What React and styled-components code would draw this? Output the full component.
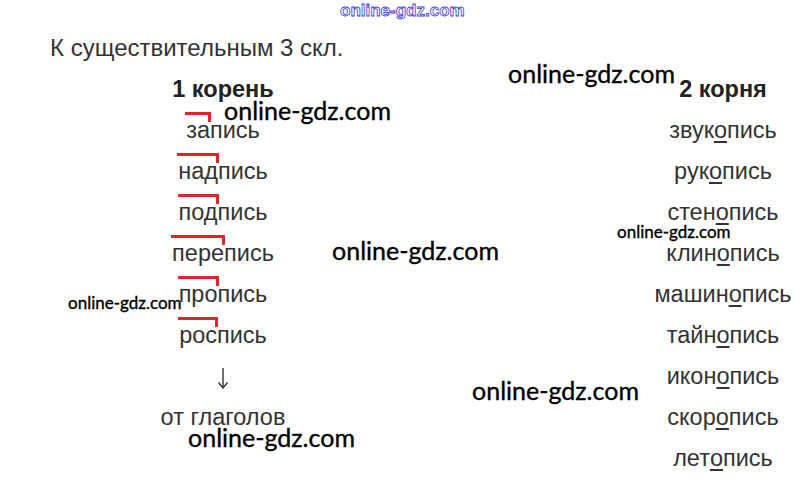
import React from "react";
import styled, { createGlobalStyle } from "styled-components";

const Global = createGlobalStyle`
  html, body { margin: 0; padding: 0; background: #fff; }
  body { font-family: "Liberation Sans", Arial, sans-serif; }
`;

const Page = styled.div`
  position: relative;
  width: 803px;
  height: 487px;
  box-sizing: border-box;
  padding-top: 36px;
  background: #fff;
  overflow: hidden;
  color: #333;
`;

const Title = styled.h1`
  margin: 0;
  padding-left: 50px;
  font: 400 24px/24px "Liberation Sans", Arial, sans-serif;
  color: #333;
`;

const Columns = styled.div`
  display: grid;
  grid-template-columns: 200px 160px;
  justify-content: space-between;
  padding-left: 123px;
  margin-top: 9px;
`;

const Column = styled.ul`
  list-style: none;
  margin: 0;
  padding: 0;
  display: flex;
  flex-direction: column;
  align-items: center;
`;

const Row = styled.li`
  height: 41px;
  display: flex;
  align-items: center;
  justify-content: center;
  font: 400 23.5px "Liberation Sans", Arial, sans-serif;
  color: #333;
  white-space: nowrap;
`;

const Heading = styled(Row)`
  font-weight: 700;
  font-size: 23.5px;
  color: #222;
`;

const ArrowRow = styled(Row)`
  padding-top: 2px;
  box-sizing: border-box;
`;

const ArrowIcon = styled.svg`
  width: 14px;
  height: 22px;
  display: block;
`;

const Prefix = styled.span`
  position: relative;
  &::after {
    content: "";
    position: absolute;
    left: -1px;
    right: -1px;
    top: -5px;
    height: 7px;
    border-top: 3px solid #e0262b;
    border-right: 3px solid #e0262b;
  }
`;

const Vowel = styled.span`
  text-decoration: underline;
  text-decoration-thickness: 2px;
  text-underline-offset: 3px;
`;

const Mark = styled.div`
  position: absolute;
  left: ${(p) => p.$x}px;
  top: ${(p) => p.$y}px;
  font: 400 ${(p) => p.$size}px/1 Lato, "Open Sans", sans-serif;
  color: #000;
  -webkit-text-stroke: 0.35px #000;
  white-space: nowrap;
  pointer-events: none;
`;

const TopMark = styled.div`
  position: absolute;
  left: 340px;
  top: 2px;
  font: 700 17px/1 "Liberation Sans", Arial, sans-serif;
  color: #fff;
  -webkit-text-stroke: 0.8px #3a3ad0;
  white-space: nowrap;
`;

const left = [
  ["за", "пись"],
  ["над", "пись"],
  ["под", "пись"],
  ["пере", "пись"],
  ["про", "пись"],
  ["рос", "пись"],
];

const right = [
  ["звук", "пись"],
  ["рук", "пись"],
  ["стен", "пись"],
  ["клин", "пись"],
  ["машин", "пись"],
  ["тайн", "пись"],
  ["икон", "пись"],
  ["скор", "пись"],
  ["лет", "пись"],
];

const marks = [
  { x: 224, y: 98, s: 25 },
  { x: 508, y: 61, s: 25 },
  { x: 332, y: 238, s: 25 },
  { x: 472, y: 378, s: 25 },
  { x: 188, y: 425, s: 25 },
  { x: 68, y: 294, s: 17 },
  { x: 617, y: 223, s: 17 },
];

export default function App() {
  return (
    <Page>
      <Global />
      <Title>К существительным 3 скл.</Title>
      <Columns>
        <Column>
          <Heading>1 корень</Heading>
          {left.map(([pre, rest]) => (
            <Row key={pre}>
              <Prefix>{pre}</Prefix>
              {rest}
            </Row>
          ))}
          <ArrowRow>
            <ArrowIcon viewBox="0 0 14 22" fill="none" stroke="#333" strokeWidth="1.4">
              <path d="M7 1 V20.5" />
              <path d="M2.5 15.5 L7 21 L11.5 15.5" />
            </ArrowIcon>
          </ArrowRow>
          <Row>от глаголов</Row>
        </Column>
        <Column>
          <Heading>2 корня</Heading>
          {right.map(([a, b]) => (
            <Row key={a}>
              {a}
              <Vowel>о</Vowel>
              {b}
            </Row>
          ))}
        </Column>
      </Columns>
      <TopMark>online-gdz.com</TopMark>
      {marks.map((m, i) => (
        <Mark key={i} $x={m.x} $y={m.y} $size={m.s}>
          online-gdz.com
        </Mark>
      ))}
    </Page>
  );
}
